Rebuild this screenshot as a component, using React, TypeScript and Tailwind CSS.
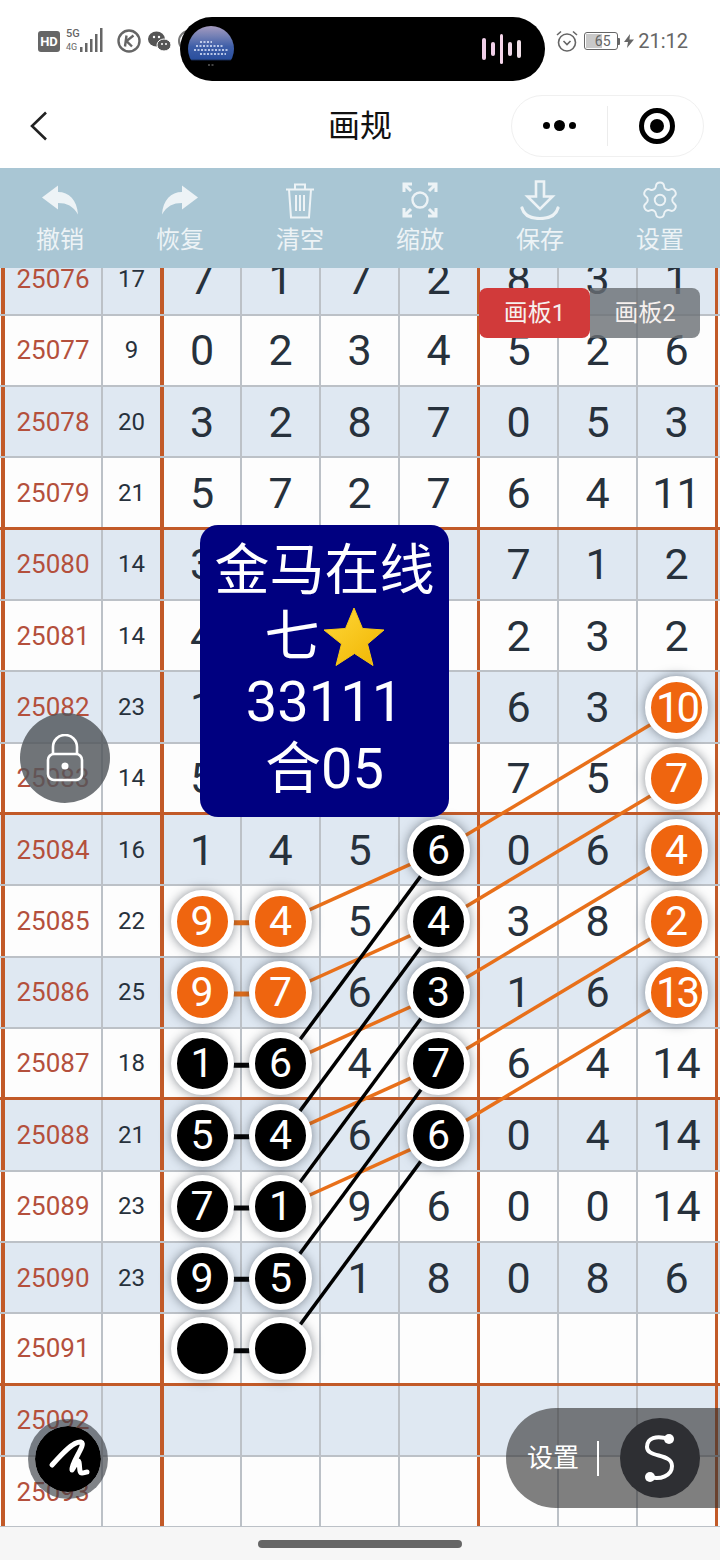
import { Settings } from "lucide-react"

// k = black ball, o = orange ball
const rows: string[][] = [
  ["25076", "17", "7", "1", "7", "2", "8", "3", "1"],
  ["25077", "9", "0", "2", "3", "4", "5", "2", "6"],
  ["25078", "20", "3", "2", "8", "7", "0", "5", "3"],
  ["25079", "21", "5", "7", "2", "7", "6", "4", "11"],
  ["25080", "14", "3", "", "", "", "7", "1", "2"],
  ["25081", "14", "4", "", "", "", "2", "3", "2"],
  ["25082", "23", "1", "", "", "", "6", "3", "o10"],
  ["25083", "14", "5", "", "", "", "7", "5", "o7"],
  ["25084", "16", "1", "4", "5", "k6", "0", "6", "o4"],
  ["25085", "22", "o9", "o4", "5", "k4", "3", "8", "o2"],
  ["25086", "25", "o9", "o7", "6", "k3", "1", "6", "o13"],
  ["25087", "18", "k1", "k6", "4", "k7", "6", "4", "14"],
  ["25088", "21", "k5", "k4", "6", "k6", "0", "4", "14"],
  ["25089", "23", "k7", "k1", "9", "6", "0", "0", "14"],
  ["25090", "23", "k9", "k5", "1", "8", "0", "8", "6"],
  ["25091", "", "k", "k", "", "", "", "", ""],
  ["25092", "", "", "", "", "", "", "", ""],
  ["25093", "", "", "", "", "", "", "", ""],
]

const colBorders = [
  "border-l-4 border-l-[#c25a28] border-r-2 border-r-[#bcc1c7]",
  "border-r-4 border-r-[#c25a28]",
  "border-r-2 border-r-[#bcc1c7]",
  "border-r-2 border-r-[#bcc1c7]",
  "border-r-2 border-r-[#bcc1c7]",
  "border-r-[3px] border-r-[#c25a28]",
  "border-r-2 border-r-[#bcc1c7]",
  "border-r-2 border-r-[#bcc1c7]",
  "border-r-[3px] border-r-[#c25a28]",
]

const tools = ["撤销", "恢复", "清空", "缩放", "保存", "设置"]

const X = { a: 202, b: 281, c: 439, d: 677 }
const rowY = (i: number) => 280.7 + i * 71.33

// [from x, from row, to x, to row]
const orangeLines = [
  [X.b, 9, X.c, 8], [X.c, 8, X.d, 6],
  [X.b, 10, X.c, 9], [X.c, 9, X.d, 7],
  [X.b, 11, X.c, 10], [X.c, 10, X.d, 8],
  [X.b, 12, X.c, 11], [X.c, 11, X.d, 9],
  [X.b, 13, X.c, 12], [X.c, 12, X.d, 10],
  [X.a, 9, X.b, 9], [X.a, 10, X.b, 10],
]
const blackLines = [
  [X.b, 11, X.c, 8], [X.b, 12, X.c, 9], [X.b, 13, X.c, 10], [X.b, 14, X.c, 11], [X.b, 15, X.c, 12],
  [X.a, 11, X.b, 11], [X.a, 12, X.b, 12], [X.a, 13, X.b, 13], [X.a, 14, X.b, 14], [X.a, 15, X.b, 15],
]

const Ball = ({ color, label }: { color: string; label: string }) => (
  <div
    className={`relative z-20 flex size-[63px] shrink-0 items-center justify-center rounded-full border-[6px] border-white leading-none text-white shadow-[0_0_11px_rgba(40,50,60,0.55)] ${
      color === "o" ? "bg-[#ef650f]" : "bg-black"
    } ${label.length > 1 ? "text-[42px] tracking-[-3px]" : "text-[41px]"}`}
  >
    {label}
  </div>
)

const TableCell = ({ value, col }: { value: string; col: number }) => {
  const isBall = value[0] === "k" || value[0] === "o"
  const text =
    col === 0
      ? "text-[26px] text-[#b4503c]"
      : col === 1
        ? "text-[24px] text-[#27313c]"
        : "pt-[1px] text-[43px] text-[#27313c]"
  return (
    <div className={`flex items-center justify-center leading-none ${colBorders[col]} ${text}`}>
      {isBall ? <Ball color={value[0]} label={value.slice(1)} /> : value}
    </div>
  )
}

const StatusBar = () => (
  <div className="flex h-[85px] items-center justify-between pb-[3px] pl-[38px] pr-[32px] text-[#666]">
    <div className="flex items-center">
      <div className="flex h-[21px] w-[22px] items-center justify-center rounded-[3px] bg-[#666] text-[13px] font-bold leading-none text-white">HD</div>
      <svg width="42" height="26" viewBox="0 0 42 26" className="ml-[5px]" fill="#666">
        <text x="1" y="9" fontSize="11" fontWeight="500" fontFamily="Roboto">5G</text>
        <text x="1" y="22" fontSize="9" fontFamily="Roboto">4G</text>
        <rect x="15" y="19" width="2.5" height="5" />
        <rect x="20" y="15" width="2.5" height="9" />
        <rect x="25" y="11" width="2.5" height="13" />
        <rect x="30" y="6" width="2.5" height="18" />
        <rect x="35" y="0" width="2.500" height="24" />
      </svg>
      <svg width="24" height="24" viewBox="0 0 24 24" className="ml-[10px]" fill="none" stroke="#666" strokeWidth="2.4">
        <circle cx="12" cy="12" r="10.500" />
        <path d="M9.500 6.500L8 17.500M16.500 6.500L9.500 12l5.500 5.500" />
      </svg>
      <svg width="23" height="21" viewBox="0 0 23 21" className="ml-[7px]">
        <ellipse cx="8.500" cy="8" rx="8.500" ry="7.500" fill="#555" />
        <ellipse cx="16" cy="14" rx="7" ry="6" fill="#555" stroke="#fff" strokeWidth="1" />
        <circle cx="6" cy="6" r="1.200" fill="#fff" />
        <circle cx="11" cy="6" r="1.200" fill="#fff" />
        <circle cx="14" cy="13" r="1" fill="#fff" />
        <circle cx="18" cy="13" r="1" fill="#fff" />
      </svg>
      <div className="ml-[7px] size-[22px] rounded-full border-2 border-[#777]" />
    </div>
    <div className="flex items-center">
      <svg width="24" height="22" viewBox="0 0 24 22" fill="none" stroke="#666" strokeWidth="1.6">
        <circle cx="12" cy="12.500" r="8.500" />
        <path d="M8.500 11l3.500 3.500 3.500-3.500M2 5l4-3.500M22 5l-4-3.500" />
      </svg>
      <div className="ml-[5px] flex h-[18px] w-[34px] rounded-[3px] border border-[#666] p-[1px]">
        <div className="flex flex-1 items-center justify-center bg-[linear-gradient(90deg,#c9c9c9_55%,transparent_55%)] pl-[3px] text-[14px] leading-none">65</div>
      </div>
      <div className="h-[7px] w-[2px] rounded-r-[1px] bg-[#666]" />
      <svg width="12" height="14" viewBox="0 0 12 14" className="ml-[3px]" fill="#666">
        <path d="M7 0L1 8h4l-1 6 7-8.500H6.500z" />
      </svg>
      <span className="ml-[3px] text-[20px] leading-none">21:12</span>
    </div>
  </div>
)

const NavBar = () => (
  <div className="grid h-[83px] grid-cols-[1fr_auto_1fr] items-center bg-white pb-[2px]">
    <svg width="20" height="30" viewBox="0 0 20 30" className="ml-[29px]" fill="none" stroke="#222" strokeWidth="2.6">
      <path d="M17 1.500L3 15l14 13.500" />
    </svg>
    <div className="text-[32px] leading-none text-[#111]">画规</div>
    <div className="mr-[16px] flex h-[62px] w-[193px] items-center justify-self-end rounded-full border border-[#f0f0f0]">
      <div className="flex w-[95px] items-center justify-center gap-[4px]">
        <div className="size-[7px] rounded-full bg-black" />
        <div className="size-[11px] rounded-full bg-black" />
        <div className="size-[7px] rounded-full bg-black" />
      </div>
      <div className="h-[40px] w-px bg-[#ececec]" />
      <div className="flex flex-1 items-center justify-center pl-[3px]">
        <div className="flex size-[36px] items-center justify-center rounded-full border-[5px] border-black">
          <div className="size-[14px] rounded-full bg-black" />
        </div>
      </div>
    </div>
  </div>
)

const ArrowBack = ({ flip }: { flip?: boolean }) => (
  <svg width="38" height="30" viewBox="0 0 38 30" fill="currentColor" className={flip ? "-scale-x-100" : ""}>
    <path d="M1 12.500L17 0.500V7C28 7 36 15 37 29.500 32 21 26 18 17 18v6.500z" />
  </svg>
)

const ToolIcon = ({ i }: { i: number }) => {
  if (i === 0) return <ArrowBack />
  if (i === 1) return <ArrowBack flip />
  if (i === 2)
    return (
      <svg width="30" height="37" viewBox="0 0 30 37" fill="none" stroke="currentColor" strokeWidth="2">
        <path d="M1 7.500h28M10 7.500V2.500h10v5M4 7.500l2 28h18l2-28M11 13v16M15 13v16M19 13v16" />
      </svg>
    )
  if (i === 3)
    return (
      <svg width="36" height="36" viewBox="0 0 36 36" fill="none" stroke="currentColor" strokeWidth="3">
        <circle cx="18" cy="18" r="7.500" strokeWidth="2.400" />
        <path d="M2 10V2h8M26 2h8v8M34 26v8h-8M10 34H2v-8M2.500 2.500l6.500 6.500M33.500 2.500L27 9M33.500 33.500L27 27M2.500 33.500L9 27" />
      </svg>
    )
  if (i === 4)
    return (
      <svg width="40" height="40" viewBox="0 0 40 40" fill="none" stroke="currentColor" strokeWidth="2.600">
        <path d="M16 1.500h8v15h8.500L20 29 7.500 16.500H16z" />
        <path d="M2 28c2 7 9 10.500 18 10.500S36 35 38 28" strokeWidth="3.200" strokeLinecap="round" />
      </svg>
    )
  return <Settings size={42} strokeWidth={1.1} />
}

const Toolbar = () => (
  <div className="grid h-[100px] grid-cols-6 bg-[#a9c6d4] text-[#edf3f6]">
    {tools.map((t, i) => (
      <div key={t} className="flex flex-col items-center pt-[11px]">
        <div className="flex h-[42px] items-center justify-center">
          <ToolIcon i={i} />
        </div>
        <div className="mt-[4px] text-[24px] leading-[30px]">{t}</div>
      </div>
    ))}
  </div>
)

const Star = () => (
  <svg width="62" height="60" viewBox="0 0 62 60" className="ml-[3px]">
    <defs>
      <linearGradient id="starFill" x1="0" y1="0" x2="1" y2="1">
        <stop offset="0" stopColor="#ffd83a" />
        <stop offset="1" stopColor="#f0b400" />
      </linearGradient>
    </defs>
    <path
      d="M31 1l8.500 20.500 21.500 1.500-16.500 14 5.500 21.500-18.500-12-18.500 12 5.500-21.500L1 23l21.500-1.500z"
      fill="url(#starFill)"
      stroke="#f7c814"
      strokeLinejoin="round"
    />
  </svg>
)

const DrawnLines = () => (
  <svg className="absolute inset-0 z-10 h-[1259px] w-[720px]" viewBox="0 268 720 1259" fill="none">
    {orangeLines.map(([x1, r1, x2, r2], i) => (
      <line key={i} x1={x1} y1={rowY(r1)} x2={x2} y2={rowY(r2)} stroke="#e8701a" strokeWidth={r1 === r2 ? 5 : 3.5} />
    ))}
    {blackLines.map(([x1, r1, x2, r2], i) => (
      <line key={i} x1={x1} y1={rowY(r1)} x2={x2} y2={rowY(r2)} stroke="#000" strokeWidth={r1 === r2 ? 5 : 3.5} />
    ))}
  </svg>
)

const App = () => {
  return (
    <div className="relative flex h-[1560px] w-[720px] flex-col overflow-hidden bg-white font-[Roboto,'Noto_Sans_CJK_SC',sans-serif]">
      <StatusBar />
      {/* island */}
      <div className="absolute left-[180px] top-[17px] z-40 flex h-[64px] w-[365px] items-center justify-between rounded-full bg-black pl-[8px] pr-[24px]">
        <div className="size-[46px] overflow-hidden rounded-full bg-[linear-gradient(180deg,#a59bc0_0%,#7480b5_22%,#3e5ea8_45%,#2a4f9e_72%,#000_76%)]">
          <svg width="46" height="46" viewBox="0 0 46 46" fill="none" stroke="#e4ecff" strokeWidth="1.300" strokeDasharray="2 1.500">
            <path d="M12 16h12M8 20h28M6 24h34M12 28h26" />
            <path d="M20 39h6" strokeWidth="1" stroke="#888" />
          </svg>
        </div>
        <div className="flex items-center gap-[5px]">
          <div className="h-[22px] w-[4px] rounded-full bg-[#f0cfe8]" />
          <div className="h-[14px] w-[4px] rounded-full bg-[#f0cfe8]" />
          <div className="h-[30px] w-[3px] rounded-full bg-[#f5d5ea]" />
          <div className="h-[14px] w-[4px] rounded-full bg-[#f0d8e8]" />
          <div className="h-[18px] w-[4px] rounded-full bg-[#f0e0e8]" />
        </div>
      </div>
      <NavBar />
      <Toolbar />

      <div className="relative h-[1259px] overflow-hidden bg-[#fdfdfd]">
        <div className="-mt-[23.6px]">
          {rows.map((row, r) => (
            <div
              key={row[0]}
              className={`grid h-[71.33px] grid-cols-[102px_61px_78px_79px_79px_80px_79px_79px_80px] pl-[1px] ${
                r % 2 === 0 ? "bg-[#dfe8f2]" : "bg-[#fdfdfd]"
              } ${r % 4 === 3 ? "border-b-[3px] border-b-[#c25a28]" : "border-b-2 border-b-[#bcc1c7]"}`}
            >
              {row.map((v, c) => (
                <TableCell key={c} value={v} col={c} />
              ))}
            </div>
          ))}
        </div>

        <DrawnLines />

        {/* board tabs */}
        <div className="absolute left-[479px] top-[20px] z-30 flex h-[50px] w-[221px] text-[24px] leading-none text-[#f6f0ee]">
          <div className="flex w-[111px] items-center justify-center rounded-[8px] bg-[#d13a3a]">画板1</div>
          <div className="flex flex-1 items-center justify-center rounded-r-[8px] bg-[rgba(105,110,115,0.8)]">画板2</div>
        </div>

        {/* popup note */}
        <div className="absolute left-[200px] top-[257px] z-30 flex h-[292px] w-[249px] flex-col items-center rounded-[18px] bg-[#000080] pt-[12px] text-[55px] leading-[67px] text-white">
          <div>金马在线</div>
          <div className="flex h-[65px] items-center">
            七<Star />
          </div>
          <div className="text-[56px]">33111</div>
          <div className="text-[56px]">合05</div>
        </div>

        {/* lock */}
        <div className="absolute left-[20px] top-[445px] z-30 flex size-[90px] items-center justify-center rounded-full bg-[rgba(80,85,90,0.82)]">
          <svg width="38" height="48" viewBox="0 0 38 48" fill="none" stroke="#fff" strokeWidth="2.600">
            <path d="M7 20v-7a12 12 0 0 1 24 0v7" />
            <rect x="2" y="20" width="34" height="26" rx="6" />
            <circle cx="19" cy="32" r="3.500" fill="#fff" stroke="none" />
          </svg>
        </div>

        {/* pen */}
        <div className="absolute left-[28px] top-[1151px] z-30 flex size-[80px] items-center justify-center rounded-full border-[7px] border-[rgba(60,65,70,0.65)] bg-black bg-clip-padding">
          <svg width="66" height="66" viewBox="0 0 66 66" fill="none" stroke="#fff" strokeWidth="5" strokeLinecap="round" strokeLinejoin="round">
            <path d="M17 39C26 29 38 15 46 16c6 2-10 20-9 28 3-4 6-12 7-8 1 5 0 11 3 11 2 0 4-1 5-1" />
          </svg>
        </div>

        {/* settings pill */}
        <div className="absolute right-0 top-[1140px] z-30 flex h-[100px] w-[214px] items-center rounded-l-[50px] bg-[rgba(50,50,50,0.62)] pl-[21px] pr-[20px] text-white">
          <span className="text-[26px] leading-none">设置</span>
          <div className="ml-[18px] h-[35px] w-[2px] bg-white" />
          <div className="ml-auto flex size-[80px] items-center justify-center rounded-full bg-[#2e2f33]">
            <svg width="80" height="80" viewBox="0 0 80 80" fill="none" stroke="#fff" strokeWidth="4">
              <path d="M49 21C36 17 27 20 27 29c0 11 25 6 25 19 0 10-12 14-22 11" />
              <circle cx="49" cy="21" r="5" fill="#fff" stroke="none" />
              <circle cx="30" cy="59" r="5" fill="#fff" stroke="none" />
            </svg>
          </div>
        </div>
      </div>

      <div className="flex flex-1 items-center justify-center bg-[#f6f6f6]">
        <div className="h-[8px] w-[204px] rounded-full bg-[#666]" />
      </div>
    </div>
  )
}

export default App
